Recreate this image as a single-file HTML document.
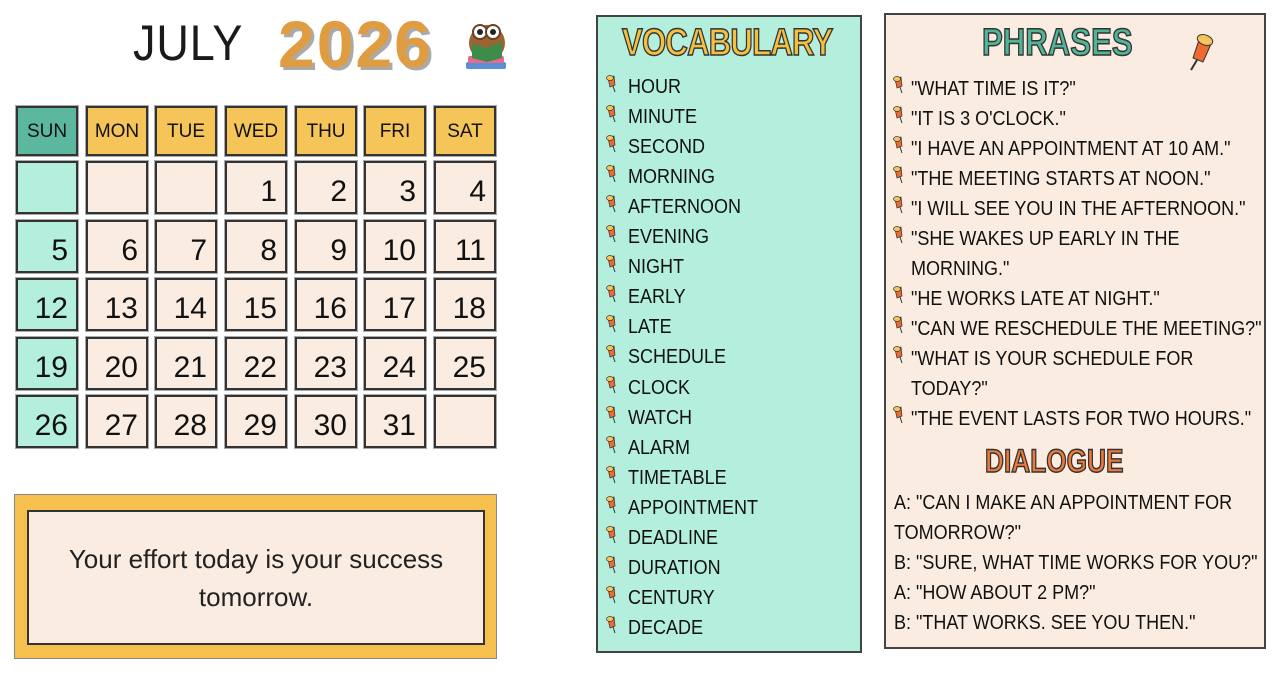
<!DOCTYPE html>
<html><head><meta charset="utf-8"><style>
body{margin:0;width:1280px;height:676px;background:#fff;position:relative;overflow:hidden;font-family:"Liberation Sans",sans-serif;color:#111}
.a{position:absolute}
.c{position:absolute;width:62px;border:2px solid #333;box-sizing:border-box;outline:1px solid #aaa}
.h{height:50px;background:#f5c55a;font-size:19px;text-align:center;line-height:48px;transform-origin:center}
.d{height:53px;background:#fbece1;font-size:30px;text-align:right;padding-right:8px;line-height:58px}
.s{background:#b3efdc}
.t{position:absolute;font-size:20px;white-space:nowrap;transform:scaleX(.9);transform-origin:left center;line-height:24px}
.pin{position:absolute;width:12px;height:18px}
</style></head><body>
<div class="a" style="left:133px;top:14px;font-size:50px;letter-spacing:1px;transform:scaleX(.9);transform-origin:left;color:#1a1a1a">JULY</div>
<div class="a" style="left:278px;top:6px;font-size:66px;letter-spacing:2px;font-weight:bold;color:#e09c40;text-shadow:3px 3px 0 #aaa">2026</div>
<svg class="a" style="left:462px;top:18px" width="50" height="58" viewBox="0 0 50 58">
<rect x="4" y="44" width="40" height="7" rx="2" fill="#5b8fd6"/><rect x="6" y="38" width="36" height="7" rx="2" fill="#e86a8f"/>
<ellipse cx="25" cy="25" rx="18" ry="18" fill="#9a6434"/><circle cx="18" cy="14" r="7" fill="#fff" stroke="#6a4020" stroke-width="2"/><circle cx="31" cy="14" r="7" fill="#fff" stroke="#6a4020" stroke-width="2"/><circle cx="18" cy="14" r="3" fill="#222"/><circle cx="31" cy="14" r="3" fill="#222"/>
<path d="M10 26 L25 30 L40 24 L40 40 L25 44 L10 40Z" fill="#3e8c4a"/></svg>
<div id="cal"></div>
<script>
var xs=[16,86,155,225,295,364,434],hd=["SUN","MON","TUE","WED","THU","FRI","SAT"],h="";
for(var i=0;i<7;i++)h+='<div class="c h" style="left:'+xs[i]+'px;top:106px;'+(i==0?'background:#5bb89f;':'')+'">'+hd[i]+'</div>';
var ys=[161,220,278,337,395],n=-3;
for(var r=0;r<5;r++)for(var i=0;i<7;i++){n++;var v=(n>=1&&n<=31)?n:"";
h+='<div class="c d'+(i==0?' s':'')+'" style="left:'+xs[i]+'px;top:'+ys[r]+'px">'+v+'</div>';}
document.getElementById('cal').innerHTML=h;
</script>
<div class="a" style="left:14px;top:494px;width:483px;height:165px;background:#f5c04e;box-sizing:border-box;border:1px solid #888"></div>
<div class="a" style="left:27px;top:510px;width:458px;height:135px;background:#fbece1;border:2px solid #333;box-sizing:border-box;font-size:26px;text-align:center;padding-top:28px;line-height:38px;color:#222">Your effort today is your success<br>tomorrow.</div>
<div class="a" style="left:596px;top:15px;width:266px;height:638px;background:#b3efdc;border:2px solid #444;box-sizing:border-box"></div>
<div class="a" style="left:622px;top:22px;font-size:38px;font-weight:bold;color:#f5c040;-webkit-text-stroke:1.5px #333;transform:scaleX(.82);transform-origin:left;letter-spacing:-1px">VOCABULARY</div>
<div class="a" style="left:884px;top:13px;width:382px;height:636px;background:#fbece1;border:2px solid #444;box-sizing:border-box"></div>
<div class="a" style="left:982px;top:22px;font-size:38px;font-weight:bold;color:#4fb596;-webkit-text-stroke:1.5px #333;transform:scaleX(.82);transform-origin:left">PHRASES</div>
<svg class="a" style="left:1183px;top:28px" width="40" height="48" viewBox="0 0 40 48"><path d="M8 42 L14 32" stroke="#333" stroke-width="2"/><path d="M10 30 L16 12 L28 16 L20 34 Z" fill="#ee6a30" stroke="#333"/><ellipse cx="22" cy="12" rx="8" ry="5" fill="#f5c55a" stroke="#333" transform="rotate(20 22 12)"/></svg>
<div class="a" style="left:985px;top:443px;font-size:32px;font-weight:bold;color:#ee7a38;-webkit-text-stroke:1.5px #333;transform:scaleX(.82);transform-origin:left">DIALOGUE</div>
<div id="txt"></div>
<script>
var pin='<svg viewBox="0 0 12 18" width="12" height="18"><path d="M3 3 L9 1 L10 10 L5 12Z" fill="#ee6a30" stroke="#333" stroke-width=".7"/><ellipse cx="5" cy="3" rx="3.5" ry="2.5" fill="#f5c55a" stroke="#333" stroke-width=".7"/><path d="M8 11 L10 17" stroke="#333"/></svg>';
var v=["HOUR","MINUTE","SECOND","MORNING","AFTERNOON","EVENING","NIGHT","EARLY","LATE","SCHEDULE","CLOCK","WATCH","ALARM","TIMETABLE","APPOINTMENT","DEADLINE","DURATION","CENTURY","DECADE"],o="";
for(var i=0;i<v.length;i++){var y=87+i*30.05;o+='<div class="pin" style="left:605px;top:'+(y-12)+'px">'+pin+'</div><div class="t" style="left:628px;top:'+(y-12)+'px">'+v[i]+'</div>';}
var p=[['"WHAT TIME IS IT?"',1],['"IT IS 3 O\'CLOCK."',1],['"I HAVE AN APPOINTMENT AT 10 AM."',1],['"THE MEETING STARTS AT NOON."',1],['"I WILL SEE YOU IN THE AFTERNOON."',1],['"SHE WAKES UP EARLY IN THE',1],['MORNING."',0],['"HE WORKS LATE AT NIGHT."',1],['"CAN WE RESCHEDULE THE MEETING?"',1],['"WHAT IS YOUR SCHEDULE FOR',1],['TODAY?"',0],['"THE EVENT LASTS FOR TWO HOURS."',1]];
for(var i=0;i<p.length;i++){var y=89+i*30;if(p[i][1])o+='<div class="pin" style="left:892px;top:'+(y-13)+'px">'+pin+'</div>';o+='<div class="t" style="left:911px;top:'+(y-12)+'px">'+p[i][0]+'</div>';}
var d=['A: "CAN I MAKE AN APPOINTMENT FOR','TOMORROW?"','B: "SURE, WHAT TIME WORKS FOR YOU?"','A: "HOW ABOUT 2 PM?"','B: "THAT WORKS. SEE YOU THEN."'];
for(var i=0;i<d.length;i++){o+='<div class="t" style="left:894px;top:'+(503+i*30-12)+'px">'+d[i]+'</div>';}
document.getElementById('txt').innerHTML=o;
</script>
</body></html>
